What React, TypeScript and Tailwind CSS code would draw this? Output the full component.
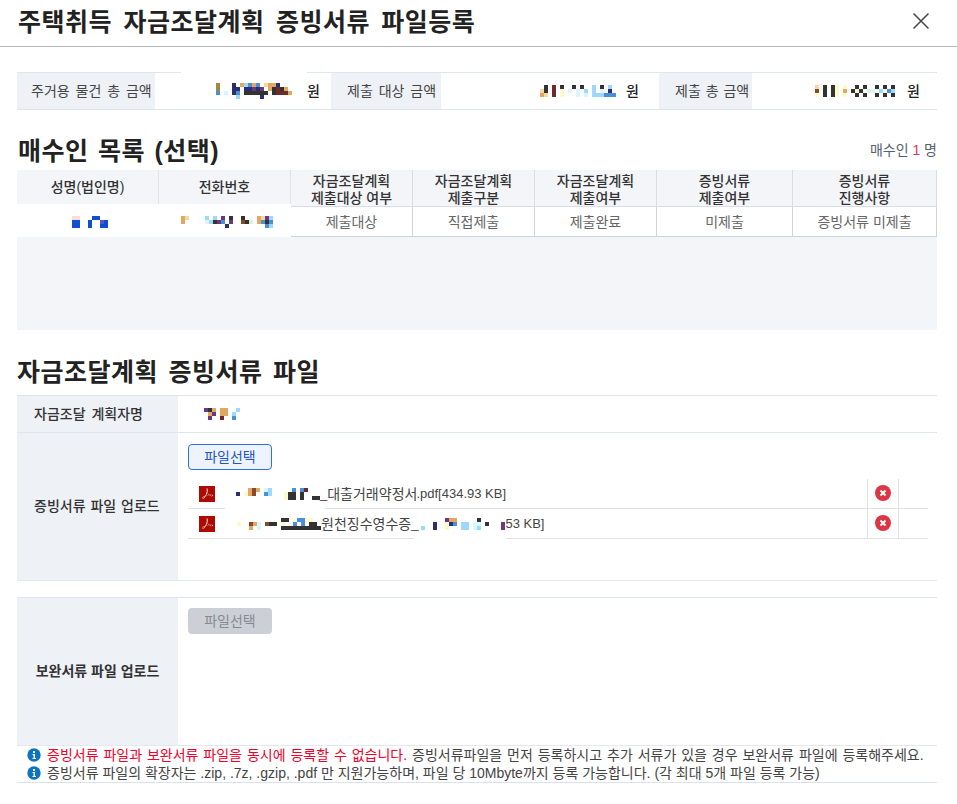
import { SiAdobeacrobatreader } from 'react-icons/si';

const PALETTE: Record<string, string> = {
  d: '#333333',
  n: '#2a2f70',
  b: '#4a90d9',
  B: '#1050d0',
  l: '#9fd8ff',
  p: '#d8f6ff',
  y: '#fff8c8',
  t: '#e0a860',
  f: '#f8d8a0',
  o: '#a08a40',
  r: '#702a2a',
  m: '#8a4a2a',
  v: '#6a3a80',
  w: '#ffdcd8',
  g: '#d8f5d8',
  i: '#5a50d0',
};

function Mosaic({ rows }: { rows: string[] }) {
  const cols = rows[0].length;
  return (
    <svg width={cols * 4} height={rows.length * 4} className="shrink-0" shapeRendering="crispEdges">
      {rows.flatMap((row, y) =>
        row.split('').map((c, x) =>
          PALETTE[c] ? <rect key={`${x}-${y}`} x={x * 4} y={y * 4} width="4" height="4" fill={PALETTE[c]} /> : null,
        ),
      )}
    </svg>
  );
}

const AMOUNT_1 = [
  'o...n.tlbtb.fttn....',
  'o...nn.nnvnv.tdrdt..',
  'b.p.nb.dddddd.drrrt.',
  '.....l.....n........',
];
const AMOUNT_2 = [
  '...d.r.d..d.d..l.d.l.',
  '..fd.r.y.p.p.l.l.p.n.',
  '..tf.r.y...p.p.lllbbb',
];
const AMOUNT_3 = [
  'f.d.dy.y..d.d..d.d.d.',
  'm.d.dy.t.dyd.gp.l.bl.',
  'y.d.dy.y..d.d..d.d.d.',
];
const NAME = ['ww...BB..', 'BB..B..iB', 'BB..B..BB'];
const PHONE = [
  'tf....l.l.v.d..d...tfvl',
  't.....pldvb.v..mdg.tbdb',
  '...........n.........bl',
];
const PLANNER = ['vdt.tt..l', '.tv.tt.l.', '.v..r..b.'];
const FILE_1 = ['...tmt.pl.....b.br...', 'n.ytm..bl...ydd.d....', '............ydd.d..dd'];
const FILE_2 = ['...........dd..bbyy..', 'y..mtp.mdd.y..b.b.dd.', '...t.p.....dddddddddd'];
const FILE_2B = ['......vtt.....d......', '...n..ynb.ll.pp.d...v', 'l..n..y...ll.pl.....v'];

const INFO_TEXT = 'text-[14px] leading-[17px] text-[#444]';

function DeleteIcon() {
  return (
    <svg width="16" height="16" viewBox="0 0 16 16" className="mb-px">
      <circle cx="8" cy="8" r="8" fill="#dc3545" />
      <path d="M5.5 5.5l5 5M10.5 5.5l-5 5" stroke="#fff" strokeWidth="2" />
    </svg>
  );
}

function InfoIcon() {
  return (
    <svg width="14" height="14" viewBox="0 0 14 14" className="shrink-0">
      <circle cx="7" cy="7" r="6.7" fill="#0d75c0" />
      <rect x="6" y="3" width="2" height="2" fill="#fff" />
      <path d="M5.5 6H8v4h1v1H5.5v-1h1V7h-1z" fill="#fff" />
    </svg>
  );
}

function PdfIcon() {
  return (
    <span className="mb-px flex h-4 w-4 shrink-0 items-center justify-center bg-[#ad0b00] text-[#f4d5d0]">
      <SiAdobeacrobatreader size={11} />
    </span>
  );
}

function FileRow({ gapLeft, gapWidth, children }: { gapLeft: string; gapWidth: string; children: React.ReactNode }) {
  return (
    <div className="relative flex h-[30px] border-b border-[#e2e2e2]">
      <div className="flex min-w-0 flex-1 items-center pl-[11px] pt-px text-[14px] text-[#444]">{children}</div>
      <div className="flex w-[32px] items-center justify-center border-x border-[#e2e2e2]">
        <DeleteIcon />
      </div>
      <div className="w-[29px]" />
      <div className={`absolute -bottom-px h-px bg-white ${gapLeft} ${gapWidth}`} />
    </div>
  );
}

const COLS = [
  { head: ['자금조달계획', '제출대상 여부'], value: '제출대상', w: 'w-[122px]' },
  { head: ['자금조달계획', '제출구분'], value: '직접제출', w: 'w-[122px]' },
  { head: ['자금조달계획', '제출여부'], value: '제출완료', w: 'w-[122px]' },
  { head: ['증빙서류', '제출여부'], value: '미제출', w: 'w-[136px]' },
  { head: ['증빙서류', '진행사항'], value: '증빙서류 미제출', w: 'w-[144px]' },
];

export default function App() {
  return (
    <div
      className="min-h-[804px] bg-white text-[#222]"
      style={{ fontFamily: '"Liberation Sans", "Noto Sans CJK KR", sans-serif' }}
    >
      <header className="flex h-[47px] items-center justify-between border-b border-[#b5b9bd] pl-[18px] pr-[28px]">
        <h1 className="text-[25px] font-bold tracking-[0.5px] [word-spacing:4px] text-[#222]">주택취득 자금조달계획 증빙서류 파일등록</h1>
        <svg width="16" height="16" viewBox="0 0 16 16" className="mb-[4px]">
          <path d="M0.5 0.5l15 15M15.5 0.5l-15 15" stroke="#444" strokeWidth="1.5" fill="none" />
        </svg>
      </header>

      <div className="px-[17px] pb-[20px] pr-[20px]">
        <div className="mt-[25px] flex h-[38px] border-y border-[#dfe5ee] text-[14px]">
          <div className="flex w-[138px] items-center bg-[#eef1f6] pl-[14px] text-[#444] [word-spacing:2px]">주거용 물건 총 금액</div>
          <div className="relative flex w-[176px] items-center justify-end gap-[11px] pr-[11px] font-medium">
            <Mosaic rows={AMOUNT_1} />
            <span>원</span>
            <div className="absolute -top-px left-[26px] h-px w-[126px] bg-white" />
          </div>
          <div className="flex w-[110px] items-center bg-[#eef1f6] pl-[16px] text-[#444] [word-spacing:2px]">제출 대상 금액</div>
          <div className="flex w-[218px] items-center justify-end gap-[10px] pr-[20px] font-medium">
            <Mosaic rows={AMOUNT_2} />
            <span>원</span>
          </div>
          <div className="flex w-[93px] items-center bg-[#eef1f6] pl-[16px] text-[#444] [word-spacing:1px]">제출 총 금액</div>
          <div className="flex flex-1 items-center justify-end gap-[8px] pr-[17px] font-medium">
            <Mosaic rows={AMOUNT_3} />
            <span>원</span>
          </div>
        </div>

        <div className="mt-[23px] flex h-[37px] items-start justify-between">
          <h2 className="pl-px text-[25px] font-bold leading-[37px] tracking-[0.5px] [word-spacing:2px]">매수인 목록 (선택)</h2>
          <p className="pt-[8px] text-[14px] leading-[18px] text-[#55606e]">
            매수인 <span className="font-medium text-[#e8344e]">1</span> 명
          </p>
        </div>

        <div className="flex text-center text-[14px] leading-[17px]">
          <div className="w-[142px]">
            <div className="flex h-[34px] items-center justify-center border-r border-[#dde4ee] bg-[#f3f5f9] font-medium text-[#333]">성명(법인명)</div>
            <div className="flex h-[33px] items-start justify-center pl-[4px] pt-[12px]">
              <Mosaic rows={NAME} />
            </div>
          </div>
          <div className="w-[132px]">
            <div className="flex h-[34px] items-center justify-center border-r border-[#dde4ee] bg-[#f3f5f9] font-medium text-[#333]">전화번호</div>
            <div className="flex h-[33px] items-start justify-center pl-[4px] pt-[12px]">
              <Mosaic rows={PHONE} />
            </div>
          </div>
          {COLS.map((c) => (
            <div key={c.value} className={c.w}>
              <div className="flex h-[37px] flex-col justify-center border-r border-b border-[#d9dde5] bg-[#f3f5f9] pt-[3px] font-medium text-[#333]">
                {c.head.map((h) => (
                  <span key={h}>{h}</span>
                ))}
              </div>
              <div className="flex h-[30px] items-center justify-center border-r border-b border-[#d0d3da] pt-px text-[#666]">{c.value}</div>
            </div>
          ))}
        </div>
        <div className="h-[93px] bg-[#f3f5f9]" />

        <h2 className="mt-[25px] h-[40px] text-[25px] font-bold leading-[34px] tracking-[0.5px] [word-spacing:3px]">자금조달계획 증빙서류 파일</h2>

        <div className="border-t border-[#dfe5ee] text-[14px]">
          <div className="flex h-[37px] border-b border-[#dfe5ee]">
            <div className="flex w-[161px] items-center bg-[#eef1f6] pl-[17px] font-medium text-[#333] [word-spacing:2px]">자금조달 계획자명</div>
            <div className="flex items-center pl-[26px]">
              <Mosaic rows={PLANNER} />
            </div>
          </div>
          <div className="flex h-[148px] border-b border-[#e5e8ee]">
            <div className="flex w-[161px] items-center bg-[#eef1f6] pl-[17px] font-medium text-[#333] [word-spacing:1px]">증빙서류 파일 업로드</div>
            <div className="flex-1 pl-[10px] pr-[9px] pt-[11px]">
              <button
                type="button"
                className="h-[26px] w-[84px] rounded-[4px] border border-[#2f6fe0] bg-[#eef4ff] text-[14px] text-[#1f55c4]"
              >
                파일선택
              </button>
              <div className="mt-[9px]">
                <FileRow gapLeft="left-[37px]" gapWidth="w-[100px]">
                  <PdfIcon />
                  <span className="ml-[21px]">
                    <Mosaic rows={FILE_1} />
                  </span>
                  <span className="text-[13px]">_</span>
                  <span>대출거래약정서</span>
                  <span className="-ml-px text-[13px]">.pdf[434.93 KB]</span>
                </FileRow>
                <FileRow gapLeft="left-[226px]" gapWidth="w-[92px]">
                  <PdfIcon />
                  <span className="ml-[22px]">
                    <Mosaic rows={FILE_2} />
                  </span>
                  <span>원천징수영수증</span>
                  <span className="text-[13px]">_</span>
                  <span className="ml-[3px]">
                    <Mosaic rows={FILE_2B} />
                  </span>
                  <span className="text-[13px]">53 KB]</span>
                </FileRow>
              </div>
            </div>
          </div>
          <div className="mt-[16px] flex h-[148px] border-t border-[#dfe5ee]">
            <div className="flex w-[161px] items-center justify-center bg-[#eef1f6] font-bold text-[#333]">보완서류 파일 업로드</div>
            <div className="flex-1 pl-[10px] pt-[10px]">
              <button
                type="button"
                disabled
                className="h-[26px] w-[84px] rounded-[4px] bg-[#ccd0d6] text-[14px] text-[#858a91]"
              >
                파일선택
              </button>
            </div>
          </div>
          <div className="border-y border-t-[#e5e8ee] border-b-[#d9e2ee] pl-[10px]">
            <div className={`flex h-[18px] items-center gap-[6px] ${INFO_TEXT}`}>
              <InfoIcon />
              <p className="[word-spacing:1px]">
                <span className="text-[#f0002a]">증빙서류 파일과 보완서류 파일을 동시에 등록할 수 없습니다.</span> 증빙서류파일을 먼저 등록하시고 추가 서류가 있을 경우 보완서류 파일에 등록해주세요.
              </p>
            </div>
            <div className={`flex h-[18px] items-center gap-[6px] ${INFO_TEXT}`}>
              <InfoIcon />
              <p>증빙서류 파일의 확장자는 .zip, .7z, .gzip, .pdf 만 지원가능하며, 파일 당 10Mbyte까지 등록 가능합니다. (각 최대 5개 파일 등록 가능)</p>
            </div>
          </div>
        </div>
      </div>
    </div>
  );
}
